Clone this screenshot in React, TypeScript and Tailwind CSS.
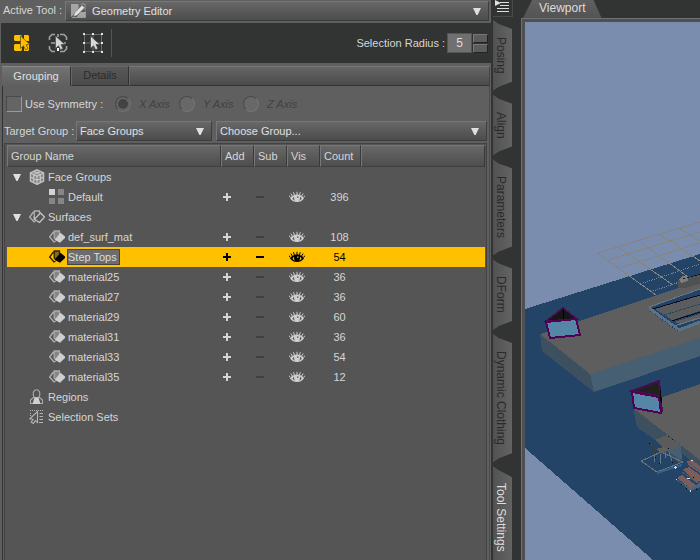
import { useState } from "react";
import type { ReactNode } from "react";
import clsx from "clsx";

type IconKind = "default" | "surface";

interface GroupItem {
  name: string;
  count: number;
  icon: IconKind;
}

const surfaces: GroupItem[] = [
  { name: "def_surf_mat", count: 108, icon: "surface" },
  { name: "Step Tops", count: 54, icon: "surface" },
  { name: "material25", count: 36, icon: "surface" },
  { name: "material27", count: 36, icon: "surface" },
  { name: "material29", count: 60, icon: "surface" },
  { name: "material31", count: 36, icon: "surface" },
  { name: "material33", count: 54, icon: "surface" },
  { name: "material35", count: 12, icon: "surface" },
];

const sideTabs = [
  "Posing",
  "Align",
  "Parameters",
  "DForm",
  "Dynamic Clothing",
  "Tool Settings",
];

function Triangle({ className }: { className?: string }) {
  return (
    <svg viewBox="0 0 8 7" className={clsx("h-[7px] w-2", className)} fill="#e0e0e0">
      <path d="M0 0h8L4.6 7H3.4z" />
    </svg>
  );
}

function FaceGroupsIcon() {
  return (
    <svg viewBox="0 0 16 16" className="h-4 w-4" fill="none" stroke="#c4c4c4" strokeWidth="1.3">
      <path d="M8 .8 14.6 4v8L8 15.4 1.4 12V4z" fill="#858585" />
      <path d="M1.4 4 8 7.2 14.6 4M8 7.2v8.2M4.7 2.4l6.6 3.2v8M11.3 2.4 4.7 5.6v8M1.4 8 8 11.2 14.6 8" />
    </svg>
  );
}

function SurfacesIcon() {
  return (
    <svg viewBox="0 0 16 16" className="h-4 w-4" fill="none" stroke="#b0b0b0" strokeWidth="1.3">
      <path d="M5 3.5H4L.7 8 5 13l1.5-1" />
      <path d="M5.3 9V2h5.2v2.5" />
      <path d="M5.3 9v1.5L11.5 4l4 4-5 5.5L6.5 11z" stroke="#c4c4c4" />
    </svg>
  );
}

function SurfaceIcon({ dark }: { dark: boolean }) {
  return (
    <svg viewBox="0 0 16 16" className="h-4 w-4" fill="none" strokeWidth="1.3">
      <path d="M5 3.5H4L.7 8 5 13l1.5-.8" stroke={dark ? "#2a2000" : "#b0b0b0"} />
      <path d="M5.2 2h5.3v4l-4 4.500L5.200 9z" fill={dark ? "#8a6c10" : "#858585"} stroke={dark ? "#2a2000" : "#acacac"} />
      <path d="M11.500 3.800 16 7.500V9l-5 4.800L5.800 11z" fill={dark ? "#000" : "#cfcfcf"} />
    </svg>
  );
}

function DefaultIcon() {
  return (
    <svg viewBox="0 0 16 16" className="h-4 w-4" fill="#868686">
      <path d="M0 0h6v6H0z" fill="#d2d2d2" />
      <path d="M9 0h6v6H9zM0 9h6v6H0zM9 9h6v6H9z" />
    </svg>
  );
}

function RegionsIcon() {
  return (
    <svg viewBox="0 0 16 16" className="h-4 w-4" fill="none" stroke="#aaa" strokeWidth="1.1">
      <path d="M4.600 7C3.500 4 4.600.8 7.500.8S11.500 4 10.400 7L9.500 8.500H5.500z" />
      <path d="M5 8 1.500 11v3.500h2.500M10 8l3.500 3v3.500H11" />
      <path d="M5.500 8.500h4l2 6.500h-8z" fill="#d0d0d0" stroke="none" />
    </svg>
  );
}

function SelectionSetsIcon() {
  return (
    <svg viewBox="0 0 16 16" className="h-4 w-4" fill="none" stroke="#b4b4b4" strokeWidth="1.1">
      <path d="M1 1.500h14" strokeDasharray="1 1" />
      <path d="M1.500 4v3" strokeDasharray="1 1" />
      <path d="M8.500 2.500v11L6.300 11.500 4.500 14.500 2.200 13.200 4 10.300.8 9.800z" />
      <path d="M10.500 4.500H14M10.500 7.500H14M10.500 10.500H14M10 13.500h4" />
    </svg>
  );
}

function EyeIcon({ dark }: { dark: boolean }) {
  const ink = dark ? "#000" : "#cfcfcf";
  const gap = dark ? "#ffc000" : "#555";
  return (
    <svg viewBox="0 0 16 12" className="h-3 w-4" fill="none">
      <path d="M1 7.500C3 4.500 5.200 3.500 8 3.500s5 1 7 4c-2 2.500-4 3.500-7 3.500S3 10 1 7.500z" fill={ink} />
      <path d="M1.300 6.500 0 4.500M3.300 5 1.800 2.500M5.300 4 4.500 1.200M8 4V.8M10.500 4l.8-2.800M12.600 5l1.600-2.500M14.600 6.500 16 4.500" stroke={ink} />
      <path d="M3.500 7.500c.4-1 1-1.500 1.700-1.800-.4 1.500 0 3 1 4-1.200-.4-2.200-1.200-2.700-2.200zM12.600 7.500c-.4-1-1-1.500-1.700-1.800.4 1.500 0 3-1 4 1.200-.4 2.200-1.200 2.700-2.200zM8 5.500h1.500v1.300H8z" fill={gap} />
    </svg>
  );
}

function Cursor({ fill, edge }: { fill: string; edge: string }) {
  return (
    <path
      d="M8.500 4v12.500l3-2.700 2 4 2.500-1.200-2-4h4z"
      fill={fill}
      stroke={edge}
      strokeWidth="0.8"
    />
  );
}

function FaceSelectIcon() {
  return (
    <svg viewBox="0 0 22 22" className="h-[22px] w-[22px]">
      <path d="M3 3h6l1 1v4L9 9H3L2 8V4zM12 3h4l1 1v5h-5zM3 12h6l1 1v5l-1 1H3l-1-1v-5zM12 12h5v6l-1 1h-4z" fill="#ffc000" />
      <Cursor fill="#ffc000" edge="#6b5208" />
    </svg>
  );
}

function EdgeSelectIcon() {
  return (
    <svg viewBox="0 0 22 22" className="h-[22px] w-[22px]" fill="none">
      <path d="M8 2.500H5L2.500 5v3M13 2.500h4L19.500 5v3M19.500 14v3L17 19.500h-4M8 19.500H5L2.500 17v-3M4 11h4M11 2v3M17 11h2" stroke="#a2a2a2" strokeWidth="1.600" />
      <path d="M10 16h2v3h-2z" fill="#fff" />
      <Cursor fill="#d4d4d4" edge="#555" />
    </svg>
  );
}

function VertexSelectIcon() {
  return (
    <svg viewBox="0 0 22 22" className="h-[22px] w-[22px]" fill="none">
      <path d="M2.500 2.500h17v17h-17zM11 2.500v17M2.500 11h17" stroke="#6c6c6c" />
      <path d="M1 1h2v2H1zM10 1h2v2h-2zM19 1h2v2h-2zM1 10h2v2H1zM19 10h2v2h-2zM1 19h2v2H1zM10 19h2v2h-2zM19 19h2v2h-2z" fill="#e2e2e2" />
      <Cursor fill="#d8d8d8" edge="#444" />
    </svg>
  );
}

function GeometryIcon() {
  return (
    <svg viewBox="0 0 16 16" className="h-4 w-4" fill="none">
      <path d="M0 1h7.500v6L0 14zM9.500 9H14v6H5z" fill="#a4a4a4" />
      <path d="M9.500 1H14v6M1 14.500h13.500V8" stroke="#999" />
      <path d="m2.500 13.500 1-3.500L11 2.200 13.600 4.700 6 12.400z" fill="#e4e4e4" stroke="#6c6c6c" strokeWidth="0.600" />
    </svg>
  );
}

interface PickerProps {
  id: string;
  value: string;
  icon?: ReactNode;
  className?: string;
}

function Picker({ id, value, icon, className }: PickerProps) {
  return (
    <div className={clsx("relative min-w-0", className)}>
      <select
        id={id}
        aria-label={value}
        className={clsx(
          "block h-5 w-full appearance-none border border-[#3e3e3e] border-t-[#777] border-l-[#777] bg-linear-to-b from-[#686868] to-[#4c4c4c] pr-5 text-[#e0e0e0] outline-none",
          icon ? "pl-[26px]" : "pl-[3px]",
        )}
      >
        <option>{value}</option>
      </select>
      {icon && <span className="pointer-events-none absolute top-0.5 left-1.5">{icon}</span>}
      <Triangle className="pointer-events-none absolute top-[7px] right-2" />
    </div>
  );
}

function AxisRadio({ label, checked }: { label: string; checked?: boolean }) {
  return (
    <label className="flex w-16 items-center gap-2 text-[#424242] italic">
      <input
        type="radio"
        name="axis"
        disabled
        defaultChecked={checked}
        className="h-4 w-4 appearance-none rounded-full border border-[#4b4b4b] border-r-[#747474] border-b-[#747474] bg-[#686868] checked:bg-[#434343] checked:shadow-[inset_0_0_0_2px_#666]"
      />
      {label}
    </label>
  );
}

function BranchRow({ name, icon, open }: { name: string; icon: ReactNode; open?: boolean }) {
  return (
    <tr className="h-5">
      <td className="p-0" colSpan={6}>
        <div className="flex items-center pl-1.5">
          <span className="w-4">{open && <Triangle />}</span>
          {icon}
          <span className="pl-[3px]">{name}</span>
        </div>
      </td>
    </tr>
  );
}

interface ItemRowProps {
  item: GroupItem;
  selected: boolean;
  onSelect: () => void;
}

function ItemRow({ item, selected, onSelect }: ItemRowProps) {
  return (
    <tr
      onClick={onSelect}
      className={clsx("h-5", selected && "bg-[#ffc000] text-black")}
    >
      <td className="p-0">
        <div className="flex items-center gap-0.5 pl-[42px]">
          {item.icon === "default" ? <DefaultIcon /> : <SurfaceIcon dark={selected} />}
          <span
            className={clsx(
              "border pr-0.5 leading-[14px]",
              selected ? "border-[#444] bg-[#6c6c6c] text-[#ddd]" : "border-transparent",
            )}
          >
            {item.name}
          </span>
        </div>
      </td>
      <td className="p-0">
        <button aria-label={`Add to ${item.name}`} className="block pl-0.5">
          <svg viewBox="0 0 8 8" className="h-2 w-2" fill="currentColor">
            <path d="M3 0h2v3h3v2H5v3H3V5H0V3h3z" />
          </svg>
        </button>
      </td>
      <td className="p-0">
        <button
          aria-label={`Subtract from ${item.name}`}
          className={clsx("block pl-0.5", selected ? "text-black" : "text-[#404040]")}
        >
          <svg viewBox="0 0 8 8" className="h-2 w-2" fill="currentColor">
            <path d="M0 3h8v2H0z" />
          </svg>
        </button>
      </td>
      <td className="p-0">
        <button aria-label={`Show ${item.name}`} className="block pl-0.5">
          <EyeIcon dark={selected} />
        </button>
      </td>
      <td className="py-0 pr-0.5 pl-0 text-center">{item.count}</td>
      <td className="p-0" />
    </tr>
  );
}

function GroupTable() {
  const [selected, setSelected] = useState("Step Tops");
  const head =
    "h-[22px] border border-t-[#777] border-r-[#3a3a3a] border-b-[#3f3f3f] border-l-[#777] bg-linear-to-b from-[#686868] to-[#4e4e4e] px-[3px] py-0 text-left font-normal";

  return (
    <table className="w-full table-fixed border-separate border-spacing-0">
      <colgroup>
        <col className="w-[214px]" />
        <col className="w-[33px]" />
        <col className="w-[33px]" />
        <col className="w-[33px]" />
        <col className="w-[41px]" />
        <col />
      </colgroup>
      <thead>
        <tr>
          <th className={head}>Group Name</th>
          <th className={head}>Add</th>
          <th className={head}>Sub</th>
          <th className={head}>Vis</th>
          <th className={head}>Count</th>
          <th className={head} />
        </tr>
      </thead>
      <tbody>
        <BranchRow name="Face Groups" icon={<FaceGroupsIcon />} open />
        <ItemRow
          item={{ name: "Default", count: 396, icon: "default" }}
          selected={selected === "Default"}
          onSelect={() => setSelected("Default")}
        />
        <BranchRow name="Surfaces" icon={<SurfacesIcon />} open />
        {surfaces.map((item) => (
          <ItemRow
            key={item.name}
            item={item}
            selected={selected === item.name}
            onSelect={() => setSelected(item.name)}
          />
        ))}
        <BranchRow name="Regions" icon={<RegionsIcon />} />
        <BranchRow name="Selection Sets" icon={<SelectionSetsIcon />} />
      </tbody>
    </table>
  );
}

function ToolPanel() {
  return (
    <section className="flex min-w-0 flex-col border-r border-[#333] bg-[#5f5f5f]">
      {/* Active tool */}
      <div className="flex h-[23px] items-start gap-[3px] pt-px pr-0.5 pl-[3px]">
        <label htmlFor="active-tool" className="leading-[18px] whitespace-pre">
          Active Tool :
        </label>
        <Picker id="active-tool" value="Geometry Editor" icon={<GeometryIcon />} className="flex-1" />
      </div>

      {/* Selection mode toolbar */}
      <div className="ml-px flex h-10 items-center bg-[#323433] pr-[3px] pl-[11px]">
        <div className="flex gap-[13px]">
          <button aria-label="Face selection">
            <FaceSelectIcon />
          </button>
          <button aria-label="Edge selection">
            <EdgeSelectIcon />
          </button>
          <button aria-label="Vertex selection">
            <VertexSelectIcon />
          </button>
        </div>
        <div className="ml-[7px] h-7 w-px bg-[#555]" />
        <label htmlFor="radius" className="ml-auto">
          Selection Radius :
        </label>
        <input
          id="radius"
          defaultValue="5"
          className="ml-0.5 h-5 w-[25px] border border-[#555] bg-[#707070] text-center text-xs text-[#ddd] outline-none"
        />
        <div className="ml-px flex flex-col gap-px">
          <button aria-label="Increase radius" className="h-[9px] w-[15px] border border-[#222] border-t-[#777] border-l-[#777] bg-[#5c5c5c]" />
          <button aria-label="Decrease radius" className="h-[9px] w-[15px] border border-[#222] border-t-[#777] border-l-[#777] bg-[#5c5c5c]" />
        </div>
      </div>

      {/* Page tabs */}
      <div role="tablist" className="mt-[3px] flex h-5 pl-0.5">
        <button role="tab" aria-selected className="w-[69px] border-t border-r border-t-[#888] border-r-[#333] bg-linear-to-b from-[#727272] to-[#5f5f5f] pb-0.5 text-[#e0e0e0]">
          Grouping
        </button>
        <button role="tab" aria-selected={false} className="w-[58px] border border-t-[#666] border-r-[#333] border-b-[#333] border-l-[#666] bg-linear-to-b from-[#585858] to-[#4a4a4a] pb-0.5 text-[#2c2c2c]">
          Details
        </button>
        <div className="mr-px flex-1 border border-t-[#777] border-r-[#444] border-b-[#333] border-l-[#666] bg-linear-to-b from-[#666] to-[#4b4b4b]" />
      </div>

      <div className="mr-px ml-0.5 flex flex-1 flex-col border-x border-l-[#333] border-r-[#4a4a4a] pt-[9px] pr-0.5 pl-px">
        {/* Symmetry */}
        <div className="flex h-[18px] items-center pl-0.5">
          <label className="flex w-[109px] items-center gap-[3px]">
            <input
              type="checkbox"
              className="h-4 w-4 appearance-none border border-[#4a4a4a] border-r-[#999] border-b-[#999] bg-[#646464]"
            />
            Use Symmetry :
          </label>
          <AxisRadio label="X Axis" checked />
          <AxisRadio label="Y Axis" />
          <AxisRadio label="Z Axis" />
        </div>

        {/* Target group */}
        <div className="mt-2 flex items-center">
          <label htmlFor="target-group" className="w-[72px] whitespace-nowrap">
            Target Group :
          </label>
          <Picker id="target-group" value="Face Groups" className="w-[136px]" />
          <Picker id="choose-group" value="Choose Group..." className="ml-1 flex-1" />
        </div>

        <div className="mt-0.5 flex-1 border border-b-0 border-[#424242] bg-[#555] pt-px pr-px pl-0.5">
          <GroupTable />
        </div>
      </div>
    </section>
  );
}

function SideTabs() {
  const [active, setActive] = useState("Tool Settings");
  return (
    <nav className="flex min-w-0 flex-col pl-px">
      <button aria-label="Pane options" className="h-[17px] w-5 border-r border-b border-[#4a4a4a]">
        <svg viewBox="0 0 19 16" className="h-4 w-[19px]" fill="none">
          <path d="M7 2.500h9M7 5.500h9M4 8.500h12M4 11.500h12" stroke="#ddd" />
          <path d="M2 0v6l6-3z" fill="#e0e0e0" />
        </svg>
      </button>
      <div role="tablist" aria-orientation="vertical" className="flex flex-1 flex-col items-start gap-1 pt-[3px]">
        {sideTabs.map((tab) => (
          <button
            key={tab}
            role="tab"
            aria-selected={tab === active}
            onClick={() => setActive(tab)}
            className={clsx(
              "flex w-[19px] shrink-0 items-start bg-linear-to-r from-[#525252] to-[#636363] py-[17px] text-xs",
              tab === "Tool Settings"
                ? "flex-1 [clip-path:polygon(0_0,30%_4px,100%_11px,100%_100%,0_100%)]"
                : "[clip-path:polygon(0_0,30%_4px,100%_9px,100%_calc(100%-9px),30%_calc(100%-4px),0_100%)]",
              tab === active ? "from-[#5f5f5f] text-[#ddd]" : "text-[#2a2a2a]",
            )}
          >
            <span className="w-4 leading-4 whitespace-nowrap [writing-mode:vertical-rl]">{tab}</span>
          </button>
        ))}
      </div>
    </nav>
  );
}

function Scene() {
  return (
    <svg
      viewBox="525 22 175 538"
      preserveAspectRatio="xMinYMin slice"
      shapeRendering="crispEdges"
      className="h-full w-full"
      fill="none"
    >
      {/* floor */}
      <path d="M525 309 700 254v306h-47L525 448z" fill="#234466" />

      {/* ground grid */}
      <g stroke="#85847f">
        <path d="M597 253 700 222M608 260l92-28M620 268l80-25M597 253l59 42M618 247l55 38M638 240l54 40M659 234l41 27M679 228l21 13" />
        <path d="M643 283l57-19M653 291l47-16" strokeDasharray="1 1" />
      </g>

      {/* first platform */}
      <path d="M540 334 700 281v57l-110 36z" fill="#5e5e5e" />
      <path d="m540 334 50 40 4 18-52-41z" fill="#3d5060" />
      <path d="m590 374 110-36v18l-106 36z" fill="#465f72" />
      <path d="m678 288v-8l22-6v10l-15 4z" fill="#505252" />
      <path d="m679 279 4-3 5 1v4l-7 2z" fill="#7d7d7d" />
      <path d="m683 279 17-5" stroke="#101418" strokeDasharray="2 2" />

      {/* sunken stairs */}
      <path d="m649 308 51-19v34l-22 8z" fill="#234466" />
      <path d="m655 309 45-14v16l-28 9z" fill="#5a5c5e" />
      <path d="m674 322 26-8v4l-20 6z" fill="#5e5e5e" />
      <path d="m649 308 30 22 21-8" stroke="#58738a" strokeWidth="3" />
      <path d="m649 307 51-18M674 326l26-8" stroke="#66798a" />
      <path d="m653 309 47-14M672 321l28-9" stroke="#0c0c22" />
      <path d="m664 315 36-11" stroke="#234466" strokeDasharray="3 1" />
      <path d="m650 311 28 20" stroke="#223a50" strokeDasharray="1 2" />

      {/* second platform */}
      <path d="m633 410 30-13 37-13v77z" fill="#5e5e5e" />
      <path d="m633 408 67 52v8l-20-16v13l-22-23-21-15z" fill="#3d5060" />
      <path d="m655 440 12-5 14 11-14 5z" fill="#5b5b5b" />
      <path d="m667 451 14-6 1 15z" fill="#465f72" />
      <path d="m668 436 1 1M672 439l1 1" stroke="#111" />

      {/* chair and rug */}
      <path d="m641 461 20-9 22 10-26 10z" stroke="#6a747a" />
      <path d="m657 473 25-8" stroke="#375e82" strokeWidth="2" />
      <path d="m650 444 6 9" stroke="#363e46" strokeWidth="3" />
      <path d="m656 449 8-2 5 3-8 4z" fill="#62605c" />
      <path d="M654 455v7M660 454v10M669 452l3 9M665 452v6" stroke="#61788a" />
      <path d="M649 443h1M655 457h1M659 463h1M668 448h1M672 462h1" stroke="#000" />

      {/* red steps */}
      <path d="m687 461 5-1 8 6v7l-12-8zM683 469l6-2 11 8v6l-4 2zM677 478l5-3 14 10-6 3z" fill="#7d5c5c" />
      <path d="m690 488 6-3 4-3v5l-10 4-14-12z" fill="#48667c" />
      <path d="m682 472 14 10M677 480l12 8M689 463l11 8" stroke="#425e74" />
      <path d="M674 467h3M675 466v3M687 478h3M690 490v2M676 479h1M691 460h2" stroke="#ddd" />
      <path d="M681 484h1M686 488h1M696 489h1M693 477h1" stroke="#000" />

      {/* cameras */}
      <path d="m563 308-17 13 31-2z" fill="#171517" stroke="#4c0b50" strokeWidth="1.500" />
      <path d="m563 309 1 10" stroke="#000" />
      <path d="m546 322 30-3 4 16-30 3z" fill="#5585a7" stroke="#520055" strokeWidth="2" />
      <path d="m632 391 27-10 3 31-3-16z" fill="#202020" stroke="#4c0b50" strokeWidth="2" />
      <path d="m660 386v26l2-12z" fill="#050505" />
      <path d="m632 392 27 5 2 16-27-5z" fill="#5585a7" stroke="#520055" strokeWidth="2" />
    </svg>
  );
}

function Viewport() {
  return (
    <main className="flex min-h-0 min-w-0 flex-col">
      <div role="tablist" className="flex h-[18px] shrink-0 items-start pl-0.5">
        <button
          role="tab"
          aria-selected
          className="h-[18px] bg-linear-to-b from-[#606060] to-[#535353] px-4 pb-0.5 text-xs leading-4 text-[#ddd] [clip-path:polygon(9px_0,calc(100%-8px)_0,100%_100%,0_100%)]"
        >
          Viewport
        </button>
      </div>
      <div className="min-h-0 flex-1 border-t border-l border-[#707070] bg-[#505050] pt-[3px] pl-[3px]">
        <div className="h-full overflow-hidden bg-[#7a8daf]">
          <Scene />
        </div>
      </div>
    </main>
  );
}

export default function App() {
  return (
    <div className="grid h-screen grid-cols-[11fr_29px_4fr] grid-rows-1 overflow-hidden bg-[#323433] font-['Liberation_Sans',Arial,sans-serif] text-[11px] leading-4 text-[#d6d6d6]">
      <ToolPanel />
      <SideTabs />
      <Viewport />
    </div>
  );
}
